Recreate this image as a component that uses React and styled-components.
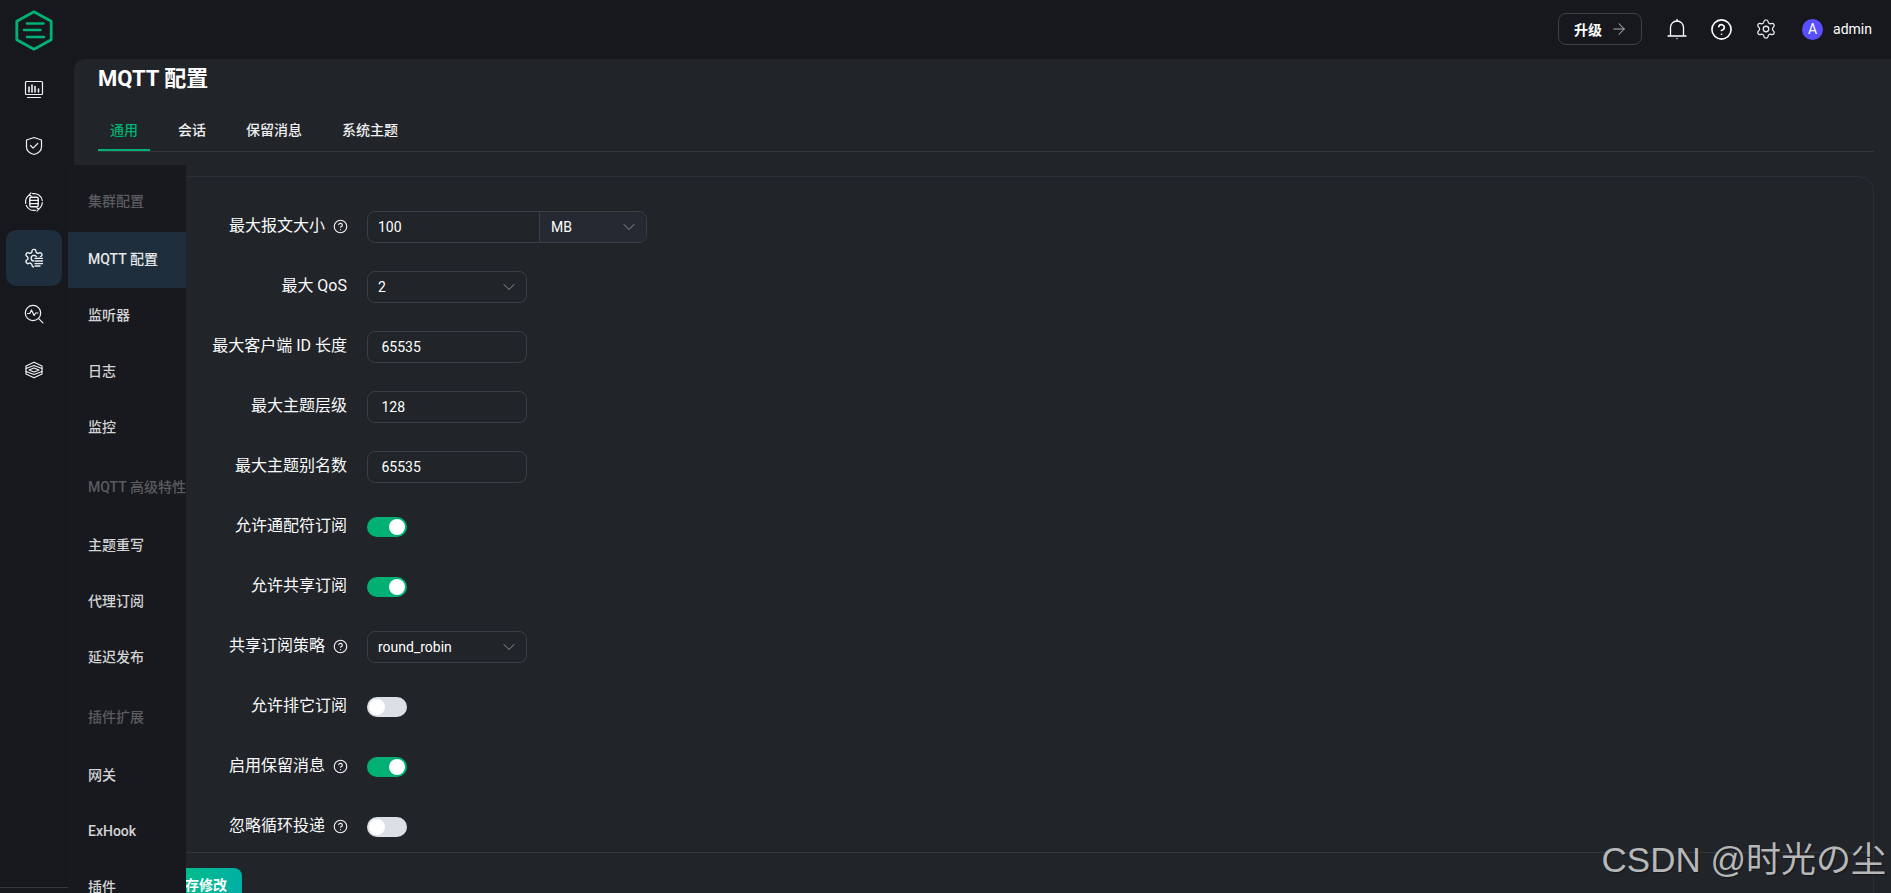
import React from 'react';
import styled, { createGlobalStyle } from 'styled-components';
import { ArrowRight, ChevronDown, CircleHelp, Settings } from 'lucide-react';

const Global = createGlobalStyle`
  html, body { margin: 0; padding: 0; height: 100%; overflow: hidden; background: #16181d; }
  * { box-sizing: border-box; }
  body { font-family: Roboto, "Noto Sans CJK SC", sans-serif; color: #fff; font-size: 14px; }
`;

const Page = styled.div`
  position: relative;
  width: 1891px;
  height: 893px;
  overflow: hidden;
  display: grid;
  grid-template-rows: 59px 1fr;
  background: #16181d;
`;
const TopBar = styled.header`
  display: flex;
  align-items: center;
  justify-content: space-between;
  padding: 0 19px 0 14px;
`;
const TopActions = styled.div`
  display: flex;
  align-items: center;
  margin-top: -1px;
`;
const UpgradeButton = styled.button`
  display: flex;
  align-items: center;
  gap: 8px;
  width: 84px;
  height: 32px;
  padding: 0 0 0 15px;
  margin-right: 25px;
  border: 1px solid #3d4045;
  border-radius: 8px;
  background: transparent;
  color: #fff;
  white-space: nowrap;
  font: 700 14px Roboto, "Noto Sans CJK SC", sans-serif;
  svg { color: #a9abad; flex: none; }
`;
const TopIcon = styled.span`
  display: flex;
  width: 20px;
  height: 20px;
  margin-right: ${p => p.$mr}px;
  align-items: center;
  justify-content: center;
  color: #fff;
  svg { flex: none; }
`;
const Avatar = styled.span`
  width: 21px;
  height: 21px;
  border-radius: 50%;
  background: #5a4fff;
  color: #fff;
  font-size: 14px;
  display: flex;
  align-items: center;
  justify-content: center;
  margin-right: 10px;
`;
const UserName = styled.span`
  font-size: 14px;
  color: #fff;
`;
const Body = styled.div`
  display: flex;
  min-height: 0;
`;
const Rail = styled.nav`
  width: 68px;
  flex: none;
  display: flex;
  flex-direction: column;
  padding-top: 3px;
`;
const RailItem = styled.div`
  height: 56px;
  margin: 0 6px;
  flex: none;
  border-radius: 10px;
  display: flex;
  align-items: center;
  justify-content: center;
  color: #eef0f2;
  background: ${p => (p.$active ? '#1e2e3c' : 'transparent')};
`;
const RailFooter = styled.div`
  margin-top: auto;
  height: 6px;
  border-top: 1px solid #34373c;
`;
const Main = styled.main`
  flex: 1;
  margin-left: 6px;
  background: #212429;
  border-top-left-radius: 10px;
  padding: 6px 17px 0 24px;
  min-width: 0;
`;
const Title = styled.h1`
  margin: 0;
  font-size: 22px;
  line-height: 28px;
  font-weight: 700;
  color: #fff;
`;
const Tabs = styled.div`
  display: flex;
  gap: 16px;
  margin-top: 19px;
  height: 40px;
  border-bottom: 1px solid #33363b;
`;
const Tab = styled.div`
  padding: 0 12px;
  height: 39px;
  line-height: 37px;
  font-size: 14px;
  font-weight: 500;
  color: ${p => (p.$active ? '#00b173' : '#f0f0f0')};
  border-bottom: 2px solid ${p => (p.$active ? '#00b173' : 'transparent')};
`;
const Card = styled.section`
  margin-top: 24px;
  border: 1px solid #2c2f35;
  border-radius: 16px 16px 0 0;
  height: 760px;
`;
const Form = styled.div`
  display: flex;
  flex-direction: column;
  gap: 28px;
  padding: 34px 0 9px;
  border-bottom: 1px solid #33363b;
`;
const Row = styled.div`
  display: flex;
  align-items: center;
  height: 32px;
  gap: 20px;
`;
const Label = styled.label`
  width: 248px;
  flex: none;
  display: flex;
  justify-content: flex-end;
  align-items: center;
  gap: 8px;
  font-size: 16px;
  line-height: 24px;
  margin-top: -3px;
  font-weight: 400;
  color: #fafbfc;
  svg { flex: none; margin-right: -1px; margin-top: 2px; }
`;
const Field = styled.div`
  width: ${p => p.$w || 160}px;
  height: 32px;
  border: 1px solid #3b3e44;
  border-radius: 8px;
  display: flex;
  align-items: center;
  padding-left: ${p => p.$pl || 13.5}px;
  font-size: 14px;
  color: #fff;
`;
const Select = styled(Field)`
  justify-content: space-between;
  padding-right: 7px;
  svg { color: #a4a6a9; }
`;
const Group = styled.div`
  display: flex;
  width: 280px;
  height: 32px;
  border: 1px solid #3b3e44;
  border-radius: 8px;
  overflow: hidden;
`;
const GroupInput = styled.div`
  width: 172px;
  padding-left: 10px;
  display: flex;
  align-items: center;
  border-right: 1px solid #3b3e44;
`;
const GroupSelect = styled.div`
  flex: 1;
  background: #262931;
  display: flex;
  align-items: center;
  justify-content: space-between;
  padding: 0 7px 0 11px;
  svg { color: #a4a6a9; }
`;
const Toggle = styled.span`
  width: 40px;
  height: 20px;
  border-radius: 10px;
  padding: 2px;
  display: flex;
  justify-content: ${p => (p.$on ? 'flex-end' : 'flex-start')};
  background: ${p => (p.$on ? '#00b173' : '#dcdfe6')};
  &::after {
    content: '';
    width: 16px;
    height: 16px;
    border-radius: 50%;
    background: #fff;
  }
`;
const Footer = styled.div`
  padding: 15px 0 0 57px;
`;
const SaveButton = styled.button`
  width: 86px;
  height: 32px;
  border: 0;
  border-radius: 8px;
  background: linear-gradient(110deg, #00c27a, #00aeaa);
  color: #fff;
  font: 700 14px Roboto, "Noto Sans CJK SC", sans-serif;
`;
const Flyout = styled.aside`
  position: absolute;
  left: 68px;
  top: 165px;
  bottom: 0;
  width: 118px;
  background: #18191e;
  padding-top: 5px;
  overflow: hidden;
`;
const FlyTitle = styled.div`
  height: 62px;
  line-height: 62px;
  padding-left: 20px;
  font-size: 14px;
  font-weight: 500;
  color: #5a5b5f;
  white-space: nowrap;
`;
const FlyItem = styled.div`
  height: 56px;
  line-height: 54px;
  padding-left: 20px;
  font-size: 14px;
  font-weight: 500;
  white-space: nowrap;
  color: ${p => (p.$active ? '#e4e6e8' : '#d2d3d4')};
  background: ${p => (p.$active ? '#1e2e3c' : 'transparent')};
`;
const Watermark = styled.div`
  position: absolute;
  right: 5px;
  top: 840px;
  font: 35px/40px "Liberation Sans", "Noto Sans CJK JP", sans-serif;
  color: #b5b7b9;
  text-shadow: 1px 1px 1px #15171a;
  white-space: nowrap;
`;

const Logo = () => (
  <svg width="40" height="44" viewBox="14 8 40 44" fill="none" stroke="#00b173" strokeLinecap="round" strokeLinejoin="round">
    <path d="M34 11.8 51.2 21.2v18.6L34 49.2 16.8 39.8V21.2z" strokeWidth="2.8" />
    <path d="M27 23.5h16.5M24 30h16.5M27 37h17" strokeWidth="2.5" />
  </svg>
);
const Ico = ({ children }) => (
  <svg width="20" height="20" viewBox="0 0 20 20" fill="none" stroke="currentColor" strokeWidth="1.2" strokeLinecap="round" strokeLinejoin="round">{children}</svg>
);
const IconMonitor = () => (
  <Ico>
    <rect x="1.5" y="1.5" width="17" height="13" rx="1" />
    <path d="M5 12V7M8 12V5M11 12V6.5M14.5 12V9" strokeWidth="1.6" />
    <path d="M3.5 17.5h13" />
  </Ico>
);
const IconShield = () => (
  <Ico>
    <path d="M10 1.5 17.5 4v7c0 3.8-3.4 6.3-7.5 7.5C5.9 17.3 2.5 14.8 2.5 11V4z" />
    <path d="m6.5 9.5 2.6 2.6 4.6-4.6" />
  </Ico>
);
const IconSync = () => (
  <Ico>
    <path d="M1.7 11.5A8.4 8.4 0 0 1 5.5 2.9" />
    <path d="M8.6 1.7A8.4 8.4 0 0 1 18.3 8.5" />
    <path d="M18.3 10.5A8.4 8.4 0 0 1 14.5 17.1" />
    <path d="M11.4 18.3A8.4 8.4 0 0 1 2.3 13.4" />
    <path d="M7 .9 5.2 2.8l2 1.4M13 19.1l1.8-1.9-2-1.4" />
    <rect x="5.8" y="5.2" width="8.4" height="9.6" rx="1.6" strokeWidth="1.4" />
    <path d="M6 8.4h8M6 11.6h8" strokeWidth="1.4" />
  </Ico>
);
const IconGearList = () => (
  <svg width="20" height="20" viewBox="0 0 20 20" fill="none" stroke="currentColor" strokeLinecap="round" strokeLinejoin="round">
    <g transform="translate(-.6 -.4) scale(.88)" strokeWidth="1.6">
      <path d="M12.22 2h-.44a2 2 0 0 0-2 2v.18a2 2 0 0 1-1 1.73l-.43.25a2 2 0 0 1-2 0l-.15-.08a2 2 0 0 0-2.73.73l-.22.38a2 2 0 0 0 .73 2.73l.15.1a2 2 0 0 1 1 1.72v.51a2 2 0 0 1-1 1.74l-.15.09a2 2 0 0 0-.73 2.73l.22.38a2 2 0 0 0 2.73.73l.15-.08a2 2 0 0 1 2 0l.43.25a2 2 0 0 1 1 1.73V20a2 2 0 0 0 2 2h.44a2 2 0 0 0 2-2v-.18a2 2 0 0 1 1-1.73l.43-.25a2 2 0 0 1 2 0l.15.08a2 2 0 0 0 2.73-.73l.22-.39a2 2 0 0 0-.73-2.73l-.15-.08a2 2 0 0 1-1-1.74v-.5a2 2 0 0 1 1-1.74l.15-.09a2 2 0 0 0 .73-2.73l-.22-.38a2 2 0 0 0-2.73-.73l-.15.08a2 2 0 0 1-2 0l-.43-.25a2 2 0 0 1-1-1.73V4a2 2 0 0 0-2-2z" />
      <circle cx="12" cy="12" r="3.2" />
    </g>
    <rect x="10" y="9.2" width="10" height="10.8" fill="#1e2e3c" stroke="none" />
    <path d="M11 10.4h7.5M11 13h7.5M11 15.6h7.5M11 18h5" strokeWidth="1.3" />
  </svg>
);
const IconPulse = () => (
  <Ico>
    <circle cx="9" cy="9" r="7.7" />
    <path d="M3.5 9.5h2.3L7.5 6l2.6 5.5 1.5-2.5h2.4" />
    <path d="m14.7 14.7 4.2 4.2" />
  </Ico>
);
const IconStack = () => (
  <Ico>
    <path d="M10 2.2 18 6v8l-8 3.8L2 14V6z" />
    <path d="M2 8.5 10 5.5l8 3M2 11.5l8 3 8-3M5 10l5-2 5 2-5 2z" />
  </Ico>
);
const IconBell = () => (
  <svg width="20" height="22" viewBox="0 0 20 22" fill="none" stroke="currentColor" strokeWidth="1.3" strokeLinecap="round">
    <path d="M1 18h18M3.5 18V9.5a6.5 6.5 0 0 1 13 0V18" />
    <path d="M10 1.5v1.4M10 20.5v.1" />
  </svg>
);

const RAIL = [IconMonitor, IconShield, IconSync, IconGearList, IconPulse, IconStack];

const Tip = () => <CircleHelp size={15} strokeWidth={1.8} color="#f4f5f6" />;
const Chev = () => <ChevronDown size={20} strokeWidth={1} />;

const FLY = [
  ['t', '集群配置'], ['a', 'MQTT 配置'], ['i', '监听器'], ['i', '日志'], ['i', '监控'],
  ['t', 'MQTT 高级特性'], ['i', '主题重写'], ['i', '代理订阅'], ['i', '延迟发布'],
  ['t', '插件扩展'], ['i', '网关'], ['i', 'ExHook'], ['i', '插件'],
];

export default function App() {
  return (
    <Page>
      <Global />
      <TopBar>
        <Logo />
        <TopActions>
          <UpgradeButton>升级<ArrowRight size={18} strokeWidth={1.4} /></UpgradeButton>
          <TopIcon $mr={24}><IconBell /></TopIcon>
          <TopIcon $mr={25}><CircleHelp size={23} strokeWidth={1.7} /></TopIcon>
          <TopIcon $mr={26}><Settings size={22} strokeWidth={1.4} color="#e8e9ea" /></TopIcon>
          <Avatar>A</Avatar>
          <UserName>admin</UserName>
        </TopActions>
      </TopBar>
      <Body>
        <Rail>
          {RAIL.map((I, i) => <RailItem key={i} $active={i === 3}><I /></RailItem>)}
          <RailFooter />
        </Rail>
        <Main>
          <Title>MQTT 配置</Title>
          <Tabs>
            <Tab $active>通用</Tab>
            <Tab>会话</Tab>
            <Tab>保留消息</Tab>
            <Tab>系统主题</Tab>
          </Tabs>
          <Card>
            <Form>
              <Row>
                <Label>最大报文大小<Tip /></Label>
                <Group>
                  <GroupInput>100</GroupInput>
                  <GroupSelect>MB<Chev /></GroupSelect>
                </Group>
              </Row>
              <Row><Label>最大 QoS</Label><Select $pl={10}>2<Chev /></Select></Row>
              <Row><Label>最大客户端 ID 长度</Label><Field>65535</Field></Row>
              <Row><Label>最大主题层级</Label><Field>128</Field></Row>
              <Row><Label>最大主题别名数</Label><Field>65535</Field></Row>
              <Row><Label>允许通配符订阅</Label><Toggle $on /></Row>
              <Row><Label>允许共享订阅</Label><Toggle $on /></Row>
              <Row><Label>共享订阅策略<Tip /></Label><Select $pl={10}>round_robin<Chev /></Select></Row>
              <Row><Label>允许排它订阅</Label><Toggle /></Row>
              <Row><Label>启用保留消息<Tip /></Label><Toggle $on /></Row>
              <Row><Label>忽略循环投递<Tip /></Label><Toggle /></Row>
            </Form>
            <Footer><SaveButton>保存修改</SaveButton></Footer>
          </Card>
        </Main>
      </Body>
      <Flyout>
        {FLY.map(([k, t]) => (k === 't'
          ? <FlyTitle key={t}>{t}</FlyTitle>
          : <FlyItem key={t} $active={k === 'a'}>{t}</FlyItem>))}
      </Flyout>
      <Watermark>CSDN @时光の尘</Watermark>
    </Page>
  );
}
